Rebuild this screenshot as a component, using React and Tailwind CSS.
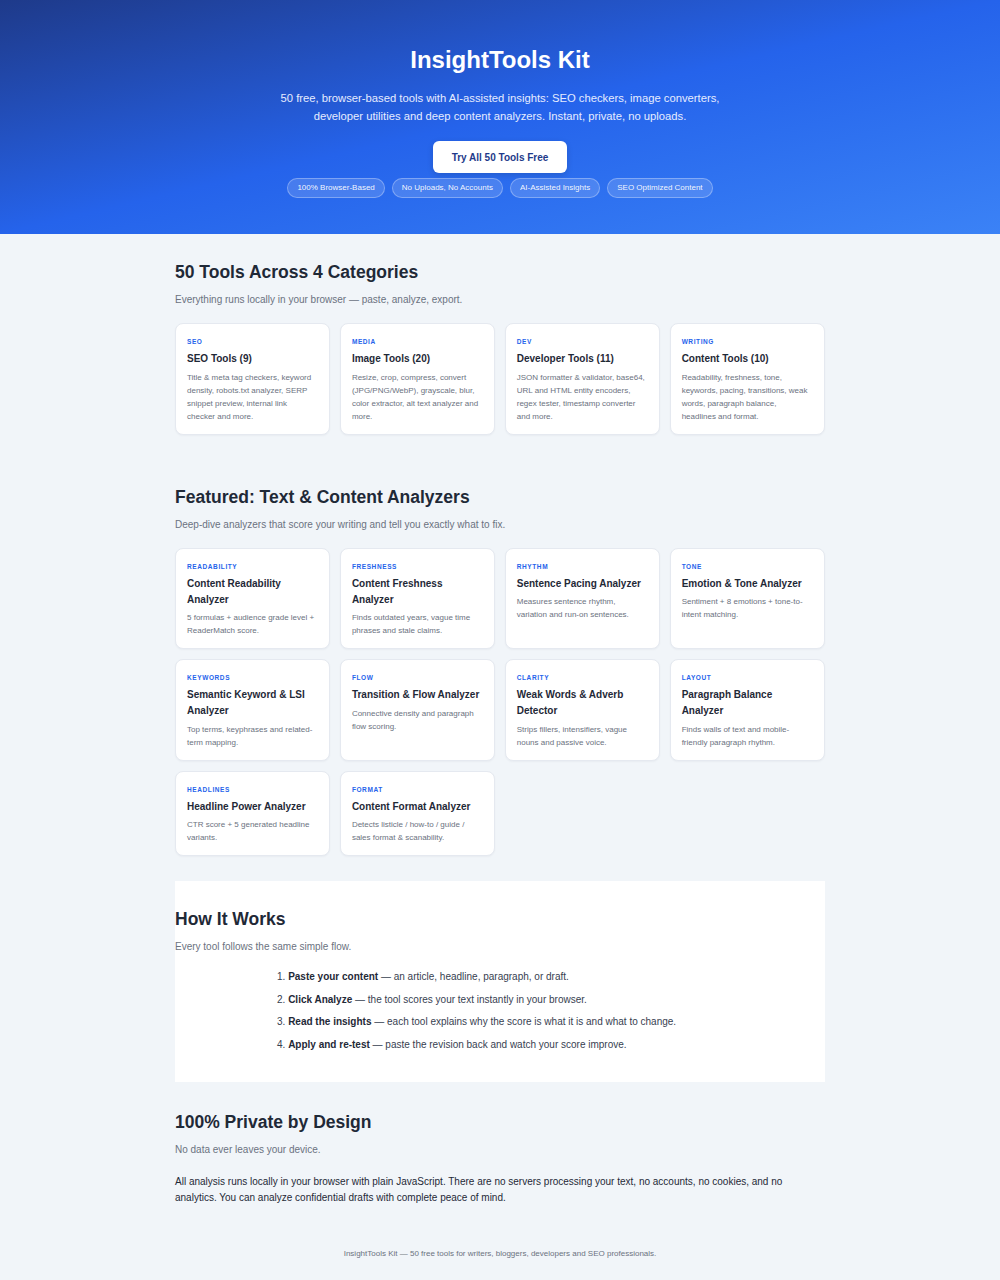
import React from "react";

const categories = [
  { label: "SEO", title: "SEO Tools (9)", desc: "Title & meta tag checkers, keyword density, robots.txt analyzer, SERP snippet preview, internal link checker and more." },
  { label: "MEDIA", title: "Image Tools (20)", desc: "Resize, crop, compress, convert (JPG/PNG/WebP), grayscale, blur, color extractor, alt text analyzer and more." },
  { label: "DEV", title: "Developer Tools (11)", desc: "JSON formatter & validator, base64, URL and HTML entity encoders, regex tester, timestamp converter and more." },
  { label: "WRITING", title: "Content Tools (10)", desc: "Readability, freshness, tone, keywords, pacing, transitions, weak words, paragraph balance, headlines and format." },
];

const featured = [
  { label: "READABILITY", title: "Content Readability Analyzer", desc: "5 formulas + audience grade level + ReaderMatch score." },
  { label: "FRESHNESS", title: "Content Freshness Analyzer", desc: "Finds outdated years, vague time phrases and stale claims." },
  { label: "RHYTHM", title: "Sentence Pacing Analyzer", desc: "Measures sentence rhythm, variation and run-on sentences." },
  { label: "TONE", title: "Emotion & Tone Analyzer", desc: "Sentiment + 8 emotions + tone-to-intent matching." },
  { label: "KEYWORDS", title: "Semantic Keyword & LSI Analyzer", desc: "Top terms, keyphrases and related-term mapping." },
  { label: "FLOW", title: "Transition & Flow Analyzer", desc: "Connective density and paragraph flow scoring." },
  { label: "CLARITY", title: "Weak Words & Adverb Detector", desc: "Strips fillers, intensifiers, vague nouns and passive voice." },
  { label: "LAYOUT", title: "Paragraph Balance Analyzer", desc: "Finds walls of text and mobile-friendly paragraph rhythm." },
  { label: "HEADLINES", title: "Headline Power Analyzer", desc: "CTR score + 5 generated headline variants." },
  { label: "FORMAT", title: "Content Format Analyzer", desc: "Detects listicle / how-to / guide / sales format & scanability." },
];

const pills = ["100% Browser-Based", "No Uploads, No Accounts", "AI-Assisted Insights", "SEO Optimized Content"];

function Card({ label, title, desc }) {
  return (
    <div className="bg-white rounded-[8px] border border-[#e5e9f0] shadow-[0_1px_2px_rgba(15,23,42,0.04)] pl-[11px] pr-[13px] pt-[13px] pb-[11px]">
      <div className="text-[6.5px] leading-[10px] font-bold tracking-[0.6px] text-[#2563eb] uppercase">{label}</div>
      <div className="mt-[4px] text-[10px] leading-[16px] font-bold text-[#1f2937]">{title}</div>
      <div className="mt-[3.5px] text-[8px] leading-[13px] text-[#6b7280]">{desc}</div>
    </div>
  );
}

function SectionHead({ title, sub }) {
  return (
    <>
      <h2 className="text-[17.5px] leading-[21px] font-bold text-[#1f2937]">{title}</h2>
      <p className="mt-[9px] text-[10px] leading-[15px] text-[#6b7280]">{sub}</p>
    </>
  );
}

export default function App() {
  return (
    <div className="min-h-[1280px] bg-[#f1f5f9] font-['Liberation_Sans',Arial,sans-serif]">
      <header className="bg-linear-to-br from-[#1e3a8a] via-[#2563eb] to-[#3b82f6] pt-[45px] pb-[36px] text-center text-white">
        <h1 className="text-[24px] leading-[30px] font-bold">InsightTools Kit</h1>
        <p className="mt-[14px] mx-auto max-w-[470px] text-[11.25px] leading-[18px] text-[#e6ecff]">
          50 free, browser-based tools with AI-assisted insights: SEO checkers, image converters, developer utilities and deep content analyzers. Instant, private, no uploads.
        </p>
        <button className="mt-[16px] h-[32px] px-[19px] rounded-[6px] bg-white text-[10px] font-bold text-[#1e3a8a] shadow-[0_2px_6px_rgba(0,0,0,0.15)]">
          Try All 50 Tools Free
        </button>
        <div className="mt-[5px] flex justify-center gap-[7px]">
          {pills.map((p) => (
            <span key={p} className="h-[20px] px-[9px] flex items-center rounded-full bg-white/15 border border-white/30 text-[8px] text-white/95">
              {p}
            </span>
          ))}
        </div>
      </header>

      <main className="w-[650px] mx-auto">
        <section className="pt-[28px]">
          <SectionHead title="50 Tools Across 4 Categories" sub="Everything runs locally in your browser — paste, analyze, export." />
          <div className="mt-[16px] grid grid-cols-4 gap-x-[9.5px] gap-y-[10px]">
            {categories.map((c) => (
              <Card key={c.label} {...c} />
            ))}
          </div>
        </section>

        <section className="pt-[52px]">
          <SectionHead title="Featured: Text & Content Analyzers" sub="Deep-dive analyzers that score your writing and tell you exactly what to fix." />
          <div className="mt-[16px] grid grid-cols-4 gap-x-[9.5px] gap-y-[10px]">
            {featured.map((c) => (
              <Card key={c.label} {...c} />
            ))}
          </div>
        </section>

        <section className="mt-[25px] bg-white pt-[28px] pb-[29px]">
          <SectionHead title="How It Works" sub="Every tool follows the same simple flow." />
          <ol className="mt-[15px] w-[446px] mx-auto list-decimal list-inside text-[10px] leading-[16px] text-[#374151] flex flex-col gap-[6.5px]">
            <li><strong className="font-bold text-[#1f2937]">Paste your content</strong> — an article, headline, paragraph, or draft.</li>
            <li><strong className="font-bold text-[#1f2937]">Click Analyze</strong> — the tool scores your text instantly in your browser.</li>
            <li><strong className="font-bold text-[#1f2937]">Read the insights</strong> — each tool explains why the score is what it is and what to change.</li>
            <li><strong className="font-bold text-[#1f2937]">Apply and re-test</strong> — paste the revision back and watch your score improve.</li>
          </ol>
        </section>

        <section className="pt-[30px]">
          <SectionHead title="100% Private by Design" sub="No data ever leaves your device." />
          <p className="mt-[17px] text-[10px] leading-[16px] text-[#1f2937]">
            All analysis runs locally in your browser with plain JavaScript. There are no servers processing your text, no accounts, no cookies, and no analytics. You can analyze confidential drafts with complete peace of mind.
          </p>
        </section>
      </main>

      <footer className="pt-[42px] pb-[20px] text-center text-[8px] leading-[12px] text-[#6b7280]">
        InsightTools Kit — 50 free tools for writers, bloggers, developers and SEO professionals.
      </footer>
    </div>
  );
}
